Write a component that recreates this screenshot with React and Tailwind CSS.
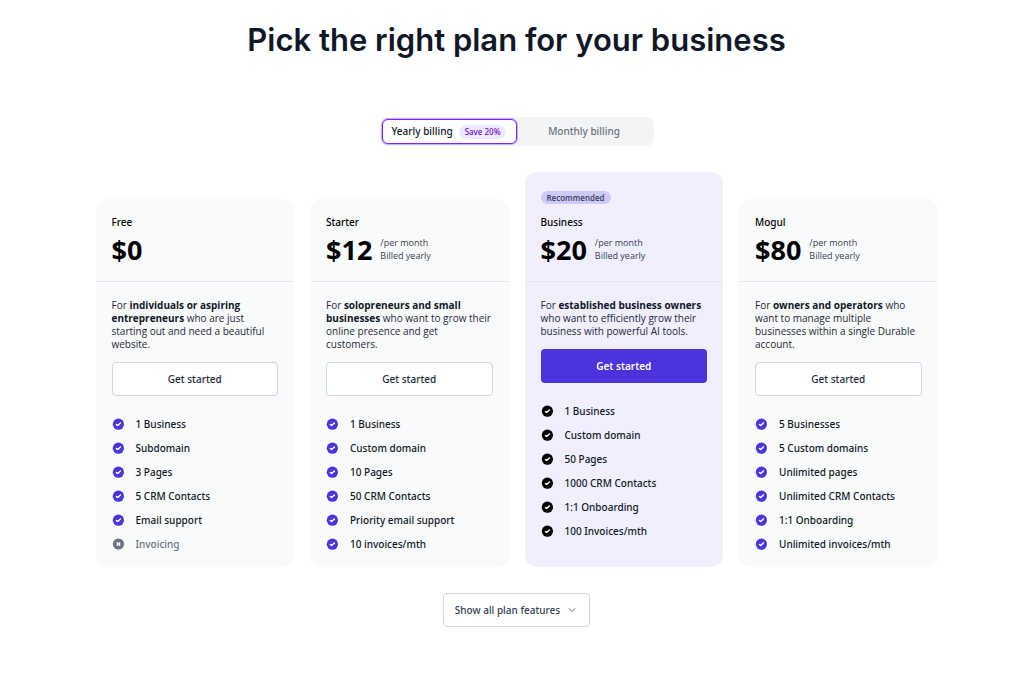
import { useState } from 'react';
import { ChevronDown } from 'lucide-react';

const plans = [
  {
    id: 'free',
    name: 'Free',
    price: '$0',
    audience: 'individuals or aspiring entrepreneurs',
    pitch: 'who are just starting out and need a beautiful website.',
    features: ['1 Business', 'Subdomain', '3 Pages', '5 CRM Contacts', 'Email support'],
    missing: ['Invoicing'],
  },
  {
    id: 'starter',
    name: 'Starter',
    price: '$12',
    paid: true,
    audience: 'solopreneurs and small businesses',
    pitch: 'who want to grow their online presence and get\ncustomers.',
    features: ['1 Business', 'Custom domain', '10 Pages', '50 CRM Contacts', 'Priority email support', '10 invoices/mth'],
  },
  {
    id: 'business',
    name: 'Business',
    price: '$20',
    paid: true,
    recommended: true,
    audience: 'established business owners',
    pitch: 'who want to efficiently grow their business with powerful AI tools.',
    features: ['1 Business', 'Custom domain', '50 Pages', '1000 CRM Contacts', '1:1 Onboarding', '100 Invoices/mth'],
  },
  {
    id: 'mogul',
    name: 'Mogul',
    price: '$80',
    paid: true,
    audience: 'owners and operators',
    pitch: 'who want to manage multiple businesses within a single Durable account.',
    features: ['5 Businesses', '5 Custom domains', 'Unlimited pages', 'Unlimited CRM Contacts', '1:1 Onboarding', 'Unlimited invoices/mth'],
  },
];

function CheckIcon({ className }) {
  return (
    <svg viewBox="0 0 12 12" className={`h-3 w-3 shrink-0 ${className}`} aria-hidden="true">
      <circle cx="6.4" cy="6.2" r="5.6" fill="currentColor" />
      <path d="M4.4 6.4 5.7 7.6 8.4 5" fill="none" stroke="#fff" strokeWidth="1.4" strokeLinecap="round" strokeLinejoin="round" />
    </svg>
  );
}

function CrossIcon() {
  return (
    <svg viewBox="0 0 12 12" className="h-3 w-3 shrink-0 text-gray-500" aria-hidden="true">
      <circle cx="6.4" cy="6" r="5.6" fill="currentColor" />
      <path d="M5.1 4.7 7.7 7.3M7.7 4.7 5.1 7.3" fill="none" stroke="#fff" strokeWidth="1.5" strokeLinecap="round" />
    </svg>
  );
}

function PlanCard({ plan }) {
  return (
    <article className={`rounded-xl ${plan.recommended ? 'bg-[#f1efff]' : 'mt-[27px] bg-gray-50'}`}>
      <header className={`border-b border-gray-200 px-4 pb-[17px] ${plan.recommended ? 'pt-[19px]' : 'pt-4'}`}>
        {plan.recommended && (
          <div className="mb-[11px] flex">
            <span className="rounded-full bg-[#cfc8fc] px-[6px] text-[8px] leading-[13px] font-semibold text-gray-700">
              Recommended
            </span>
          </div>
        )}
        <h2 className="font-['Noto_Sans',sans-serif] text-[10px] leading-[14px] font-medium text-black">{plan.name}</h2>
        <div className="mt-[7px] flex items-start gap-2">
          <span className="text-[27px] leading-[28px] font-bold text-black">{plan.price}</span>
          {plan.paid && (
            <p className="text-[9px] leading-[13px] text-gray-700">
              /per month
              <br />
              Billed yearly
            </p>
          )}
        </div>
      </header>

      <div className="px-4 pt-[17px] pb-[11px]">
        <p className="text-[10px] leading-[13px] whitespace-pre-line text-gray-800">
          For <strong className="font-bold text-gray-900">{plan.audience}</strong> {plan.pitch}
        </p>
        <button
          type="button"
          className={`mt-[11px] h-[34px] w-full rounded font-['Noto_Sans',sans-serif] text-[10px] ${
            plan.recommended ? 'bg-[#4c34dd] font-semibold text-white' : 'border border-gray-300 bg-white font-medium text-gray-800'
          }`}
        >
          Get started
        </button>
        <ul className="mt-4 font-['Noto_Sans',sans-serif] text-[10px] font-medium">
          {plan.features.map((feature) => (
            <li key={feature} className="flex h-6 items-center gap-3 text-gray-900">
              <CheckIcon className={plan.recommended ? 'text-black' : 'text-[#4c34dd]'} />
              {feature}
            </li>
          ))}
          {plan.missing?.map((feature) => (
            <li key={feature} className="flex h-6 items-center gap-3 text-gray-500">
              <CrossIcon />
              {feature}
            </li>
          ))}
        </ul>
      </div>
    </article>
  );
}

export default function App() {
  const [billing, setBilling] = useState('yearly');

  const tabStyle = (value) =>
    billing === value
      ? 'border border-violet-600 bg-white text-gray-900 ring-1 ring-violet-300'
      : 'border border-transparent text-gray-500';

  return (
    <main className="mx-auto min-h-screen max-w-[842px] bg-white pt-5 pb-12 font-['Open_Sans','Noto_Sans',sans-serif]">
      <h1 className="text-center font-['Inter',sans-serif] text-[31px] leading-10 font-semibold text-gray-900">
        Pick the right plan for your business
      </h1>

      <div className="mt-[57px] flex justify-center">
        <div className="grid w-[274px] grid-cols-2 rounded-lg bg-gray-100 px-[2px] py-[2px] font-['Noto_Sans',sans-serif]">
          <button
            type="button"
            aria-pressed={billing === 'yearly'}
            onClick={() => setBilling('yearly')}
            className={`flex h-[25px] items-center justify-center gap-[6px] rounded-md text-[10px] font-medium ${tabStyle('yearly')}`}
          >
            Yearly billing
            <span className="rounded-full bg-violet-100 px-[6px] text-[8px] leading-[14px] font-medium text-violet-700">Save 20%</span>
          </button>
          <button
            type="button"
            aria-pressed={billing === 'monthly'}
            onClick={() => setBilling('monthly')}
            className={`h-[25px] rounded-md text-[10px] font-medium ${tabStyle('monthly')}`}
          >
            Monthly billing
          </button>
        </div>
      </div>

      <section className="mt-[26px] grid grid-cols-4 gap-4">
        {plans.map((plan) => (
          <PlanCard key={plan.id} plan={plan} />
        ))}
      </section>

      <div className="mt-[26px] flex justify-center">
        <button
          type="button"
          className="flex h-[34px] items-center gap-[6px] rounded border border-gray-300 bg-white px-[11px] font-['Noto_Sans',sans-serif] text-[10px] font-medium text-gray-700"
        >
          Show all plan features
          <ChevronDown className="h-3 w-3 text-gray-500" />
        </button>
      </div>
    </main>
  );
}
